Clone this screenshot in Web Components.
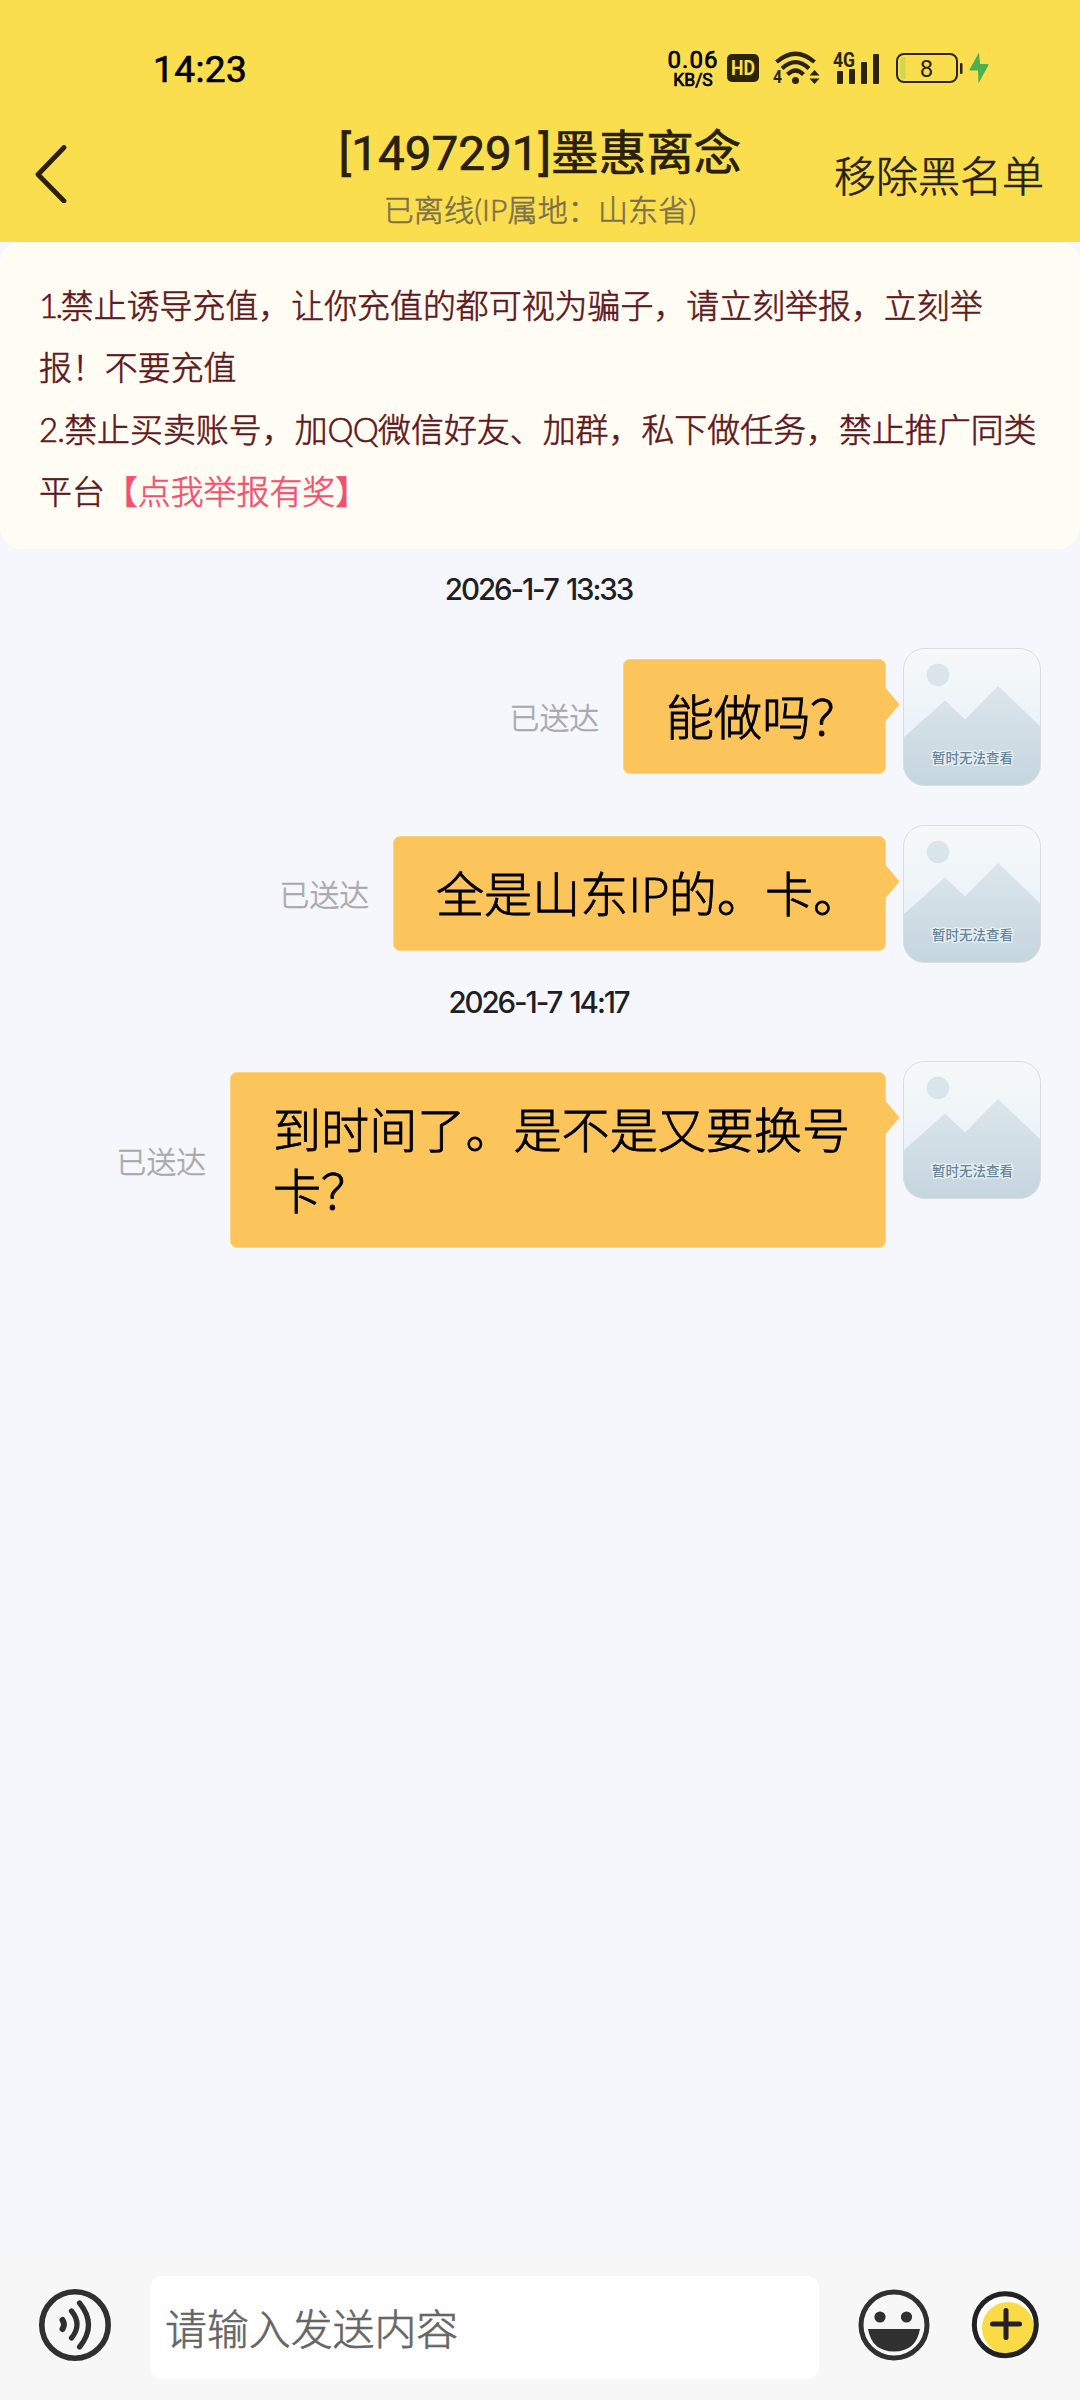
<!DOCTYPE html>
<html lang="zh-CN">
<head>
<meta charset="utf-8">
<title>聊天</title>
<style>
html,body{margin:0;padding:0}
body{width:1080px;height:2400px;overflow:hidden;background:#f5f7fc;font-family:Lato,"Noto Sans CJK SC",sans-serif;font-weight:300;color:#000;-webkit-text-stroke-width:.6px}
</style>
</head>
<body>
<chat-screen></chat-screen>
<script>
function define(name, html, setup) {
  const tpl = document.createElement('template');
  tpl.innerHTML = html;
  customElements.define(name, class extends HTMLElement {
    constructor() {
      super();
      this.attachShadow({mode: 'open'}).appendChild(tpl.content.cloneNode(true));
    }
    connectedCallback() { if (setup) setup(this, this.shadowRoot); }
  });
}

define('status-bar', `
<style>
:host{display:flex;height:110px;box-sizing:border-box;padding:26px 91px 0 153px;align-items:center;justify-content:space-between;font-family:Roboto,sans-serif;font-weight:400;-webkit-text-stroke-width:.7px}
time{font-size:37px;line-height:44px;padding-top:3px;letter-spacing:.4px}
.icons{display:flex;align-items:center;height:60px}
.speed{display:flex;flex-direction:column;align-items:center;width:52px;margin-right:8px;padding-top:1px}
.speed b{font:400 24px/25px Roboto,sans-serif;letter-spacing:1px}
.speed i{font:400 17.500px/17px Roboto,sans-serif;margin-top:-1px}
svg{display:block;flex:none;overflow:visible}
text{font-family:Roboto,sans-serif;-webkit-text-stroke-width:0}
</style>
<time>14:23</time>
<div class="icons">
 <div class="speed"><b>0.06</b><i>KB/S</i></div>
 <svg width="32" height="28" viewBox="0 0 32 28"><rect width="32" height="28" rx="5" fill="#2c2408"/><text x="16" y="21" text-anchor="middle" font-size="19.500" font-weight="700" fill="#fbde4e" textLength="24" lengthAdjust="spacingAndGlyphs">HD</text></svg>
 <svg style="margin-left:14px" width="47" height="34" viewBox="0 0 47 34"><g fill="none" stroke="#2c2408" stroke-width="4.200"><path d="M3.500 11Q22.500-5.500 41.500 11"/><path d="M9 17.500Q22.500 4.800 36 17.500"/><path d="M14.500 23.500Q22.500 15.500 30.500 23.500"/></g><circle cx="22.500" cy="29.500" r="3.500" fill="#2c2408"/><path d="M36.500 24.500L41.500 19L46.500 24.500ZM36.500 27.500L41.500 33L46.500 27.500Z" fill="#2c2408"/><text x="0" y="32" font-size="18" font-weight="700" fill="#2c2408" textLength="9" lengthAdjust="spacingAndGlyphs">4</text></svg>
 <svg style="margin-left:13px" width="47" height="34" viewBox="0 0 47 34"><g fill="#2c2408"><rect x="4" y="20" width="6" height="13" rx="1"/><rect x="16" y="18" width="6" height="15" rx="1"/><rect x="28" y="11" width="6" height="22" rx="1"/><rect x="40" y="3" width="6" height="30" rx="1"/></g><text x="0" y="15.500" font-size="19.500" font-weight="700" fill="#2c2408" textLength="22" lengthAdjust="spacingAndGlyphs">4G</text></svg>
 <svg style="margin-left:15px" width="68" height="32" viewBox="0 0 68 32"><rect x="2" y="2" width="60" height="28" rx="7" fill="none" stroke="#2c2408" stroke-width="2"/><path d="M5 9Q5 5 9 5H10.500V27H9Q5 27 5 23Z" fill="#d4d64e"/><rect x="65" y="11" width="2.500" height="11" rx="1" fill="#2c2408"/><text x="31.500" y="24.500" text-anchor="middle" font-size="24" font-weight="400" fill="#2c2408">8</text></svg>
 <svg style="margin-left:6px" width="20" height="32" viewBox="0 0 20 32"><path d="M10 .5L.5 17.500Q0 18.500 1.200 18.500H9L9.500 31.500L19.500 13Q20 12 18.500 12H11Z" fill="#4caf50"/></svg>
</div>`);

define('nav-bar', `
<style>
:host{display:grid;grid-template-columns:280px 520px 280px;height:132px}
.back{padding:35px 0 0 34px}
.back svg{display:block}
.mid{display:flex;flex-direction:column;align-items:center}
h1{margin:14px 0 0;font:400 47.600px/60px Roboto,"Noto Sans CJK SC",sans-serif;color:#292008;white-space:nowrap;-webkit-text-stroke-width:.7px}
p{margin:3px 0 0;font-size:30px;line-height:44px;letter-spacing:.15px;color:#7b714c;white-space:nowrap}
.act{font-size:42px;line-height:60px;color:#292008;text-align:right;padding:36px 36px 0 0;white-space:nowrap}
</style>
<div class="back"><svg width="36" height="58" viewBox="0 0 36 58"><path d="M30 2.500L4 29.500L30 56" fill="none" stroke="#2a210b" stroke-width="4.800" stroke-linecap="round" stroke-linejoin="round"/></svg></div>
<div class="mid"><h1><slot name="title"></slot></h1><p><slot name="sub"></slot></p></div>
<div class="act"><slot name="action"></slot></div>`);

define('notice-card', `
<style>
:host{display:block;box-sizing:border-box;height:307px;padding:32px 39px 0;background:#fffdf3;border-radius:22px;font-size:32.930px;line-height:62px;color:#5f1720;white-space:nowrap;box-shadow:inset 0 2px #fff}
div{height:62px}
::slotted(a){color:#f2506f}
</style>
<div><slot name="l1"></slot></div><div><slot name="l2"></slot></div><div><slot name="l3"></slot></div><div><slot name="l4"></slot><slot name="link"></slot></div>`);

define('time-stamp', `
<style>
:host{display:block;text-align:center;font:500 29.500px/40px Inter,sans-serif;letter-spacing:-2.100px;word-spacing:2.500px;padding-right:3px;color:#1e2023;-webkit-text-stroke-width:0}
</style><slot></slot>`);

define('photo-avatar', `
<style>
:host{display:block;width:138px;height:138px;flex:none;-webkit-text-stroke-width:0}
svg{display:block}
text{font:500 13.500px "Noto Sans CJK SC",sans-serif}
</style>
<svg width="138" height="138" viewBox="0 0 138 138">
<defs><linearGradient id="s" x1="0" y1="0" x2="0" y2="1"><stop offset="0" stop-color="#f6f9f9"/><stop offset=".55" stop-color="#ecf3f8"/><stop offset="1" stop-color="#e6eff5"/></linearGradient>
<linearGradient id="m" gradientUnits="userSpaceOnUse" x1="0" y1="38" x2="0" y2="138"><stop offset="0" stop-color="#dce5ec"/><stop offset="1" stop-color="#c5d6de"/></linearGradient>
<clipPath id="c"><rect x=".5" y=".5" width="137" height="137" rx="21"/></clipPath></defs>
<g clip-path="url(#c)"><rect width="138" height="138" fill="url(#s)"/><circle cx="35" cy="27" r="11.300" fill="#dae4eb"/><path d="M0 90L42 52.500L62 71.500L95 38L138 79V138H0Z" fill="url(#m)"/></g>
<rect x=".5" y=".5" width="137" height="137" rx="21" fill="none" stroke="#d8dde3"/>
<g text-anchor="middle"><text x="69.500" y="115" fill="#64859d" stroke="#e9f2f6" stroke-width="2.500" paint-order="stroke">暂时无法查看</text></g>
</svg>`);

define('chat-message', `
<style>
:host{display:flex;justify-content:flex-end;align-items:flex-start;padding-right:39px}
.row{display:flex;align-items:center;margin-top:11px}
.state{font-size:29.800px;line-height:44px;color:#a9a9ab;margin:3px 24px 0 0}
.bubble{position:relative;box-sizing:border-box;background:#fbc55b;border:1px solid #fbd57a;border-radius:7px;padding:25.500px 0 25.500px 42px;font-size:48.100px;line-height:61.600px;white-space:nowrap;margin-right:17px;color:#000;-webkit-text-stroke-width:.8px}
.bubble svg{position:absolute;left:100%;top:26px;display:block;margin-left:-1px}
</style>
<div class="row"><span class="state">已送达</span><div class="bubble"><slot></slot><svg width="17" height="38" viewBox="0 0 17 38"><path d="M0 0L15.500 18.500L0 37Z" fill="#fbc55b"/></svg></div></div>
<photo-avatar></photo-avatar>`, (el, root) => {
  root.querySelector('.bubble').style.width = el.getAttribute('width') + 'px';
});

define('input-bar', `
<style>
:host{display:flex;box-sizing:border-box;height:144px;background:#f7f7f7;padding:20px 38px 0 38px;align-items:flex-start}
svg{display:block;flex:none;margin-top:12px}
.field{box-sizing:border-box;width:669px;height:103px;margin:0 38px 0 38px;background:#fff;border-radius:12px;padding:23px 0 0 15px;font-size:41.900px;line-height:60px;color:#666}
</style>
<svg width="74" height="74" viewBox="0 0 74 74" fill="none" stroke="#303030"><circle cx="37" cy="37" r="33.200" stroke-width="5.600"/><g stroke-width="5.200" stroke-linecap="round"><path d="M24.500 32Q27.500 36.500 24.500 41" stroke-width="6"/><path d="M33.500 23Q44.500 36.500 33.500 50"/><path d="M41.500 15Q59.500 37 41.500 59"/></g></svg>
<div class="field"><slot></slot></div>
<svg width="74" height="74" viewBox="0 0 74 74"><circle cx="37" cy="37" r="33" fill="none" stroke="#303030" stroke-width="5"/><circle cx="23" cy="29" r="5.600" fill="#303030"/><circle cx="49.500" cy="29" r="5.600" fill="#303030"/><path d="M11 41H63Q59 63.500 37 63.500Q15 63.500 11 41Z" fill="#303030"/></svg>
<svg style="margin-left:37px" width="74" height="74" viewBox="0 0 74 74"><circle cx="37.300" cy="36.700" r="31" fill="#fff"/><circle cx="40" cy="40" r="26" fill="#fadb46"/><circle cx="37.300" cy="36.700" r="31" fill="none" stroke="#222" stroke-width="5"/><path d="M24.500 36H51.500M38 22.500V49.500" stroke="#222" stroke-width="5" stroke-linecap="round"/></svg>`);

define('chat-screen', `
<style>
:host{display:flex;flex-direction:column;width:1080px;height:2400px;background:#f5f7fc}
header{background:#fbde4e;height:242px}
main{flex:1;display:flex;flex-direction:column}
.n1{letter-spacing:-2.500px}
.n2{letter-spacing:-.8px}
</style>
<header><status-bar></status-bar>
<nav-bar><span slot="title">[1497291]墨惠离念</span><span slot="sub">已离线(IP属地：山东省)</span><span slot="action">移除黑名单</span></nav-bar></header>
<notice-card><span slot="l1"><span class="n1">1.</span>禁止诱导充值，让你充值的都可视为骗子，请立刻举报，立刻举</span><span slot="l2">报！不要充值</span><span slot="l3"><span class="n2">2.</span>禁止买卖账号，加<span class="n2">QQ</span>微信好友、加群，私下做任务，禁止推广同类</span><span slot="l4">平台</span><a slot="link">【点我举报有奖】</a></notice-card>
<main>
<time-stamp style="margin-top:20px">2026-1-7 13:33</time-stamp>
<chat-message style="margin-top:39px" width="263">能做吗？</chat-message>
<chat-message style="margin-top:39px" width="493">全是山东IP的。卡。</chat-message>
<time-stamp style="margin-top:19px">2026-1-7 14:17</time-stamp>
<chat-message style="margin-top:39px" width="656">到时间了。是不是又要换号<br>卡？</chat-message>
</main>
<input-bar>请输入发送内容</input-bar>`);
</script>
</body>
</html>
